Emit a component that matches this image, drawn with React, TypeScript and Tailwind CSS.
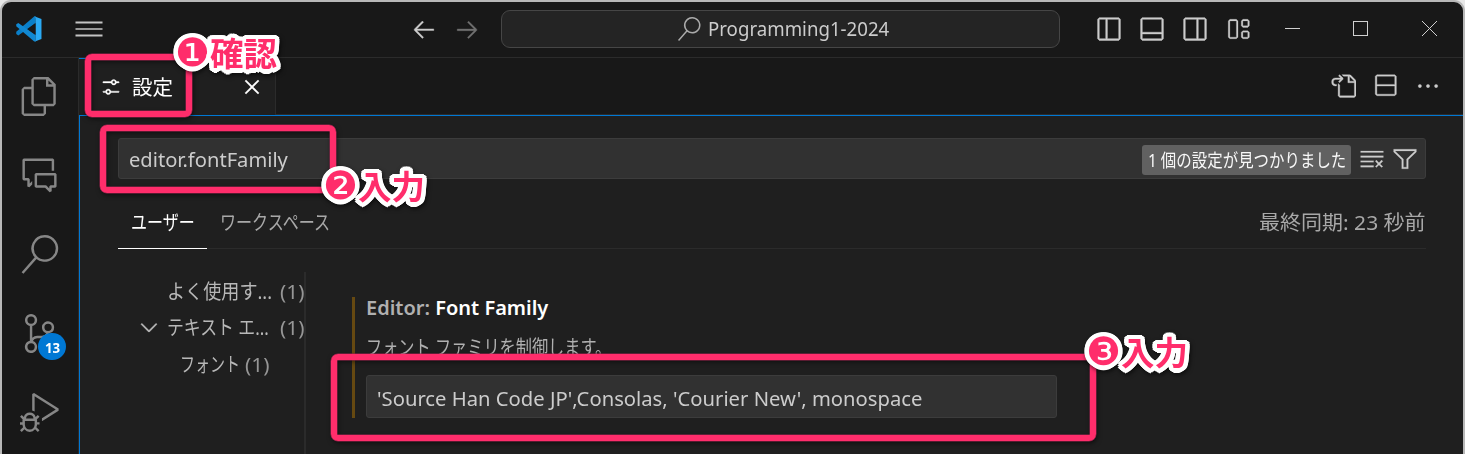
import { useLayoutEffect, useRef, type ReactNode } from 'react';
import {
  VscArrowLeft,
  VscArrowRight,
  VscChevronDown,
  VscClearAll,
  VscClose,
  VscCommentDiscussion,
  VscDebugAlt,
  VscEllipsis,
  VscFiles,
  VscFilter,
  VscGoToFile,
  VscLayout,
  VscLayoutPanelOff,
  VscLayoutSidebarLeftOff,
  VscLayoutSidebarRightOff,
  VscSearch,
  VscSettings,
  VscSourceControl,
  VscSplitVertical,
} from 'react-icons/vsc';

/* One line of text condensed or widened to the width of its box. */
function Fit({ className, children }: { className: string; children: ReactNode }) {
  const box = useRef<HTMLSpanElement>(null);
  const text = useRef<HTMLSpanElement>(null);
  useLayoutEffect(() => {
    if (box.current && text.current) {
      const ratio = box.current.clientWidth / text.current.offsetWidth;
      text.current.style.transform = `scaleX(${ratio})`;
    }
  }, []);
  return (
    <span ref={box} className={`block shrink-0 whitespace-nowrap ${className}`}>
      <span ref={text} className="inline-block origin-left">
        {children}
      </span>
    </span>
  );
}

function Logo() {
  return (
    <svg viewBox="0 0 100 100" className="size-[26px] shrink-0">
      <path d="M75 27 9 75 1 69v-8L71 1l5 1z" fill="#0a7fc9" />
      <path d="M1 39v-7l8-5 66 46v26l-6-2z" fill="#1188d2" />
      <path d="M70 1 98 12v76L70 99c3-2 5-4 5-8V9c0-4-2-6-5-8z" fill="#2aaaf4" />
      <path d="M75 28v44L46 50z" fill="#181818" />
    </svg>
  );
}

function TitleBar() {
  return (
    <header className="flex h-[56px] shrink-0 items-center border-b border-[#2b2b2b] pb-[2px] text-[#cccccc]">
      <div className="flex w-[409px] items-center pl-[14px]">
        <Logo />
        <svg viewBox="0 0 28 16" className="ml-[33px] h-4 w-7" fill="#c4c4c4">
          <path d="M0.5 0.5h27v2h-27zM0.5 7.2h27v1.6h-27zM0.5 13.5h27v2h-27z" />
        </svg>
      </div>
      <div className="flex w-[90px] items-center gap-[17px]">
        <VscArrowLeft className="size-[26px] stroke-[0.25]" />
        <VscArrowRight className="size-[26px] stroke-[0.25] text-[#707070]" />
      </div>
      <div className="flex h-[38px] w-[559px] items-center rounded-[9px] border border-[#464646] bg-[#242424] pl-[175px]">
        <VscSearch className="size-[24px] text-[#aaaaaa]" />
        <Fit className="ml-[7px] w-[181px] text-[20px] leading-[28px]">Programming1-2024</Fit>
      </div>
      <div className="ml-[36px] flex items-center gap-[17px]">
        <VscLayoutSidebarLeftOff className="size-[26px] stroke-[0.3]" />
        <VscLayoutPanelOff className="size-[26px] stroke-[0.3]" />
        <VscLayoutSidebarRightOff className="size-[26px] stroke-[0.3]" />
        <VscLayout className="size-[26px] stroke-[0.15]" />
      </div>
      <svg viewBox="0 0 152 16" className="ml-[34px] h-4 w-[152px]" fill="none" stroke="#d0d0d0" shapeRendering="crispEdges">
        <path d="M0 7.5h15M68.5 0.5h14v14h-14z" />
        <path d="m137 0 15 15m0-15-15 15" shapeRendering="auto" />
      </svg>
    </header>
  );
}

function ActivityBar() {
  return (
    <nav className="flex w-[77px] shrink-0 flex-col border-r border-[#2b2b2b] text-[#868686]">
      {[VscFiles, VscCommentDiscussion, VscSearch, VscSourceControl, VscDebugAlt].map((Icon, i) => (
        <div key={i} className="relative flex h-[78.8px] shrink-0 items-center justify-center pr-[2px] pb-px">
          <Icon className="size-[39px]" />
          {i === 3 && (
            <span className="absolute top-[39px] left-[36px] flex h-[27px] w-[28px] items-center justify-center rounded-full bg-[#0078d4] text-[15px] font-bold text-white">
              <Fit className="w-[15px]">13</Fit>
            </span>
          )}
        </div>
      ))}
    </nav>
  );
}

function EditorTabs() {
  return (
    <div className="flex h-[57px] shrink-0 justify-between text-[#cccccc]">
      <div className="flex w-[197px] items-center border-t border-r border-t-[#0078d4] border-r-[#2b2b2b] bg-[#1f1f1f] pl-[21px] text-white">
        <VscSettings className="size-[22px] stroke-[0.25]" />
        <Fit className="ml-[10px] w-[41px] pt-[2px] text-[20px] leading-[30px]">設定</Fit>
        <VscClose className="ml-[66px] size-[26px] stroke-[0.25]" />
      </div>
      <div className="flex flex-1 items-center justify-end border-b border-[#2b2b2b] pr-[22px]">
        <VscGoToFile className="size-[26px] stroke-[0.2]" />
        <VscSplitVertical className="ml-[16px] size-[26px] stroke-[0.2]" />
        <VscEllipsis className="ml-[17px] size-[26px] stroke-[0.25]" />
      </div>
    </div>
  );
}

function SearchField() {
  return (
    <div className="mr-[37px] ml-[38px] flex h-[41px] shrink-0 items-center rounded-[3px] border border-[#3c3c3c] bg-[#313131] pr-[7px] pl-[10px]">
      <Fit className="w-[159px] pt-[2px] text-[20px] leading-[30px] text-[#cccccc]">editor.fontFamily</Fit>
      <div className="mt-[2px] ml-auto flex h-[30px] w-[209px] items-center rounded-[3px] bg-[#616161] pl-[6px] text-[18.5px] leading-[30px] text-[#f8f8f8]">
        <Fit className="w-[198px]">1 個の設定が見つかりました</Fit>
      </div>
      <VscClearAll className="ml-[8px] size-[26px] stroke-[0.1] text-[#cccccc]" />
      <VscFilter className="ml-[7px] size-[26px] stroke-[0.15] text-[#cccccc]" />
    </div>
  );
}

function ScopeTabs() {
  return (
    <div className="mr-[37px] ml-[38px] flex h-[52px] shrink-0 border-b border-[#2b2b2b] text-[20px] leading-[30px] text-[#a8a8a8]">
      <div className="-mb-px flex w-[89px] justify-center border-b border-white pt-[11px] pb-[10px] text-white">
        <Fit className="w-[64px]">ユーザー</Fit>
      </div>
      <Fit className="ml-[13px] w-[110px] pt-[11px]">ワークスペース</Fit>
      <Fit className="ml-auto w-[167px] pt-[11px]">最終同期: 23 秒前</Fit>
    </div>
  );
}

function Outline() {
  return (
    <div className="flex w-[226px] shrink-0 flex-col border-r-2 border-[#2b2b2b] pt-[1.5px] text-[20px] leading-[36.5px] text-[#b8b8b8]">
      <div className="flex pl-[87px]">
        <Fit className="w-[105px]">よく使用す...</Fit>
        <Fit className="ml-[8px] w-[24px] text-[#969696]">(1)</Fit>
      </div>
      <div className="flex items-center pl-[56px]">
        <VscChevronDown className="-mt-[2px] size-[26px] stroke-[0.2]" />
        <Fit className="ml-[5px] w-[102px]">テキスト エ...</Fit>
        <Fit className="ml-[11px] w-[24px] text-[#969696]">(1)</Fit>
      </div>
      <div className="flex pl-[100px]">
        <Fit className="w-[60px]">フォント</Fit>
        <Fit className="ml-[5px] w-[24px] text-[#969696]">(1)</Fit>
      </div>
    </div>
  );
}

function Setting() {
  return (
    <section className="mt-[25px] ml-[46px] flex h-[121px] w-[705px] flex-col border-l-[3px] border-[#664911] pl-[11px] text-[20px]">
      <h2 className="flex leading-[22px] font-semibold">
        <Fit className="w-[182px]">
          <span className="text-[#b0b0b0]">Editor: </span>
          <span className="text-white">Font Family</span>
        </Fit>
      </h2>
      <Fit className="mt-[14px] w-[245px] leading-[30px] text-[#b0b0b0]">フォント ファミリを制御します。</Fit>
      <div className="mt-auto flex h-[43px] items-center rounded-[3px] border border-[#3c3c3c] bg-[#313131] pl-[10px] text-[#cccccc]">
        <Fit className="w-[545px] pt-[4px] leading-[30px]">'Source Han Code JP',Consolas, 'Courier New', monospace</Fit>
      </div>
    </section>
  );
}

function Marker({ className }: { className: string }) {
  return (
    <div
      className={`absolute rounded-[7px] border-[6px] border-[#ff2d6b] shadow-[0_0_0_0.5px_#a02450,1px_2px_5px_#0009,inset_0_0_0_0.5px_#a02450,inset_1px_2px_5px_#0008] ${className}`}
    />
  );
}

function Callout({ className, mark, children }: { className: string; mark: string; children: ReactNode }) {
  return (
    <span
      className={`absolute flex h-[40px] items-center font-['Noto_Sans_CJK_JP',sans-serif] text-[33.5px] leading-[40px] font-bold whitespace-nowrap text-[#ff2d6b] [text-shadow:4.5px_0_#fff,4.2px_1.7px_#fff,3.2px_3.2px_#fff,1.7px_4.2px_#fff,0_4.5px_#fff,-1.7px_4.2px_#fff,-3.2px_3.2px_#fff,-4.2px_1.7px_#fff,-4.5px_0_#fff,-4.2px_-1.7px_#fff,-3.2px_-3.2px_#fff,-1.7px_-4.2px_#fff,0_-4.5px_#fff,1.7px_-4.2px_#fff,3.2px_-3.2px_#fff,4.2px_-1.7px_#fff,2px_0_#fff,0_2px_#fff,-2px_0_#fff,0_-2px_#fff] [filter:drop-shadow(1px_2px_2px_#0009)] ${className}`}
    >
      <span className="flex w-[35px] justify-center font-['DejaVu_Sans',sans-serif] text-[39px] font-normal">{mark}</span>
      <span className="relative pb-[3px]">{children}</span>
    </span>
  );
}

export default function App() {
  return (
    <div className="relative h-[454px] w-[1465px] overflow-hidden bg-[#e8e8e8] font-['Noto_Sans','Noto_Sans_CJK_JP',sans-serif]">
      <div className="flex h-[454px] flex-col overflow-hidden rounded-t-[11px] border-x-2 border-t-2 border-[#b8b8b8] bg-[#181818]">
        <TitleBar />
        <div className="flex min-h-0 flex-1">
          <ActivityBar />
          <main className="flex min-w-0 flex-1 flex-col">
            <EditorTabs />
            <div className="flex min-h-0 flex-1 flex-col overflow-hidden border-t border-l border-[#0078d4] bg-[#1f1f1f] pt-[22px]">
              <SearchField />
              <div className="h-[18px] shrink-0" />
              <ScopeTabs />
              <div className="mt-[23px] flex min-h-0 flex-1">
                <Outline />
                <Setting />
              </div>
            </div>
          </main>
        </div>
      </div>
      <Marker className="top-[54px] left-[85px] h-[63px] w-[107px]" />
      <Marker className="top-[125px] left-[100px] h-[68px] w-[236px]" />
      <Marker className="top-[354px] left-[331px] h-[87px] w-[765px]" />
      <Callout className="top-[33px] left-[175px]" mark="❶">確認</Callout>
      <Callout className="top-[166px] left-[323px]" mark="❷">入力</Callout>
      <Callout className="top-[332px] left-[1086px]" mark="❸">入力</Callout>
    </div>
  );
}
